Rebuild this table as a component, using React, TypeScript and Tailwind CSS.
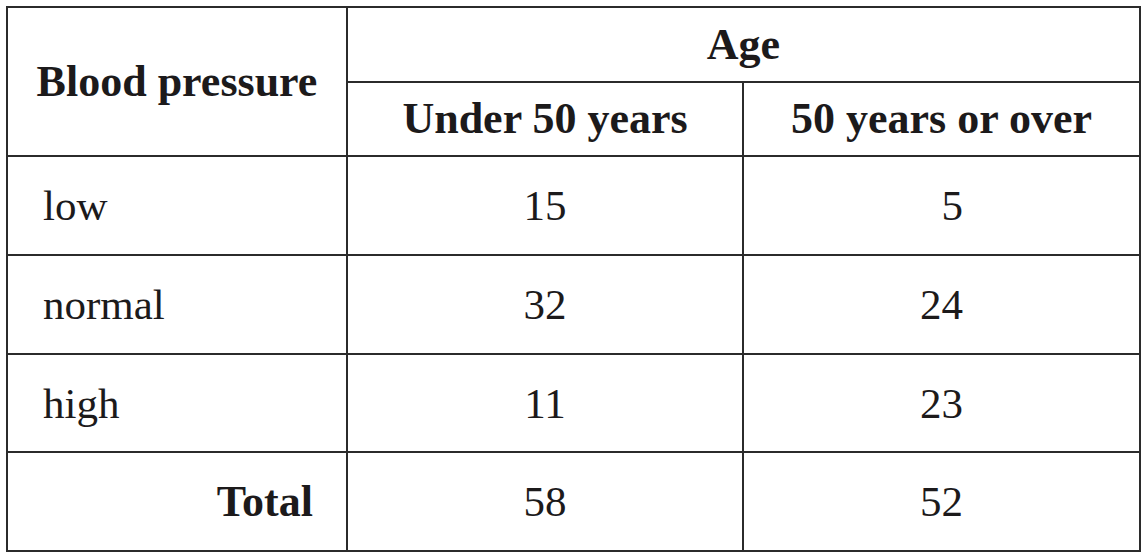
import React from 'react';

const rows = [
  { label: 'low', under: '15', over: '5' },
  { label: 'normal', under: '32', over: '24' },
  { label: 'high', under: '11', over: '23' },
];

export default function App() {
  return (
    <div className="w-[1147px] h-[559px] bg-white pl-[6px] pt-[6px]" style={{ fontFamily: '"Liberation Serif", "Times New Roman", serif' }}>
      <div className="grid w-[1135px] grid-cols-[338px_394px_395px] grid-rows-[73px_72px_97px_97px_96px_97px] gap-[2px] bg-[#2b2b2b] p-[2px] text-[43px] text-[#1c1a1b] leading-none">
        <div className="row-span-2 flex items-center justify-center bg-white text-[44px] font-bold">Blood pressure</div>
        <div className="col-span-2 flex items-center justify-center bg-white text-[44px] font-bold">Age</div>
        <div className="flex items-center justify-center bg-white text-[44px] font-bold">Under 50 years</div>
        <div className="flex items-center justify-center bg-white text-[44px] font-bold">50 years or over</div>

        {rows.map((r) => (
          <React.Fragment key={r.label}>
            <div className="flex items-center bg-white pl-[35px]">{r.label}</div>
            <div className="flex items-center justify-center bg-white">{r.under}</div>
            <div className="flex items-center justify-center bg-white">
              {r.over.length === 1 && <span className="invisible">0</span>}
              {r.over}
            </div>
          </React.Fragment>
        ))}

        <div className="flex items-center justify-end bg-white pr-[33px] text-[44px] font-bold">Total</div>
        <div className="flex items-center justify-center bg-white">58</div>
        <div className="flex items-center justify-center bg-white">52</div>
      </div>
    </div>
  );
}
